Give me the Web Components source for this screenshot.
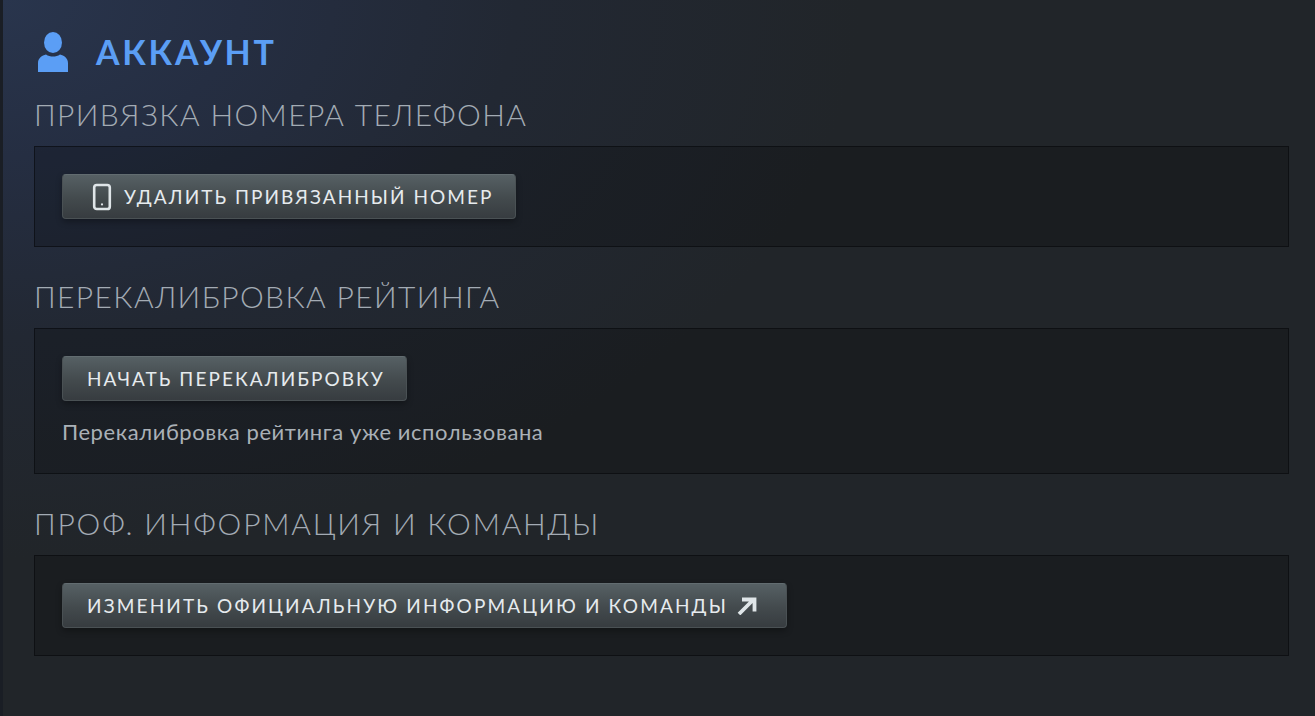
<!DOCTYPE html>
<html lang="ru">
<head>
<meta charset="utf-8">
<title>Аккаунт</title>
<style>
  html, body { margin: 0; height: 100%; }
  body {
    width: 1315px; height: 716px; overflow: hidden;
    font-family: Lato, "Noto Sans", "Liberation Sans", sans-serif;
    background:
      radial-gradient(ellipse 860px 560px at 0px 0px, #29354d 0%, #252e42 28%, #222833 60%, #212529 100%);
    background-color: #212529;
  }
</style>
</head>
<body>
<account-page>
  <page-title>АККАУНТ</page-title>

  <settings-section heading="ПРИВЯЗКА НОМЕРА ТЕЛЕФОНА">
    <game-button>
      <svg slot="icon" width="20" height="28" viewBox="0 0 20 28"><rect x="2.2" y="2" width="15.6" height="24" rx="2.6" fill="none" stroke="#dfe5e8" stroke-width="2.6"/><circle cx="10" cy="21.400" r="1.100" fill="#dfe5e8"/></svg>
      УДАЛИТЬ ПРИВЯЗАННЫЙ НОМЕР
    </game-button>
  </settings-section>

  <settings-section heading="ПЕРЕКАЛИБРОВКА РЕЙТИНГА">
    <game-button>НАЧАТЬ ПЕРЕКАЛИБРОВКУ</game-button>
    <p slot="note">Перекалибровка рейтинга уже использована</p>
  </settings-section>

  <settings-section heading="ПРОФ. ИНФОРМАЦИЯ И КОМАНДЫ" style="--heading-ls: 1.78px">
    <game-button style="--btn-ls: 2.15px">
      ИЗМЕНИТЬ ОФИЦИАЛЬНУЮ ИНФОРМАЦИЮ И КОМАНДЫ
      <svg slot="after" width="20" height="18" viewBox="0 0 20 18"><path d="M2 17 15 4M5 2.500h12.500v12" fill="none" stroke="#dfe5e8" stroke-width="3.8"/></svg>
    </game-button>
  </settings-section>
</account-page>

<script>
class AccountPage extends HTMLElement {
  connectedCallback() {
    this.attachShadow({mode: 'open'}).innerHTML = `
      <style>
        :host { display: flex; flex-direction: column; padding: 28px 26px 0 31px; height: 100%; box-sizing: border-box; border-left: 3px solid #1a1e25; }
      </style>
      <slot></slot>`;
  }
}

class PageTitle extends HTMLElement {
  connectedCallback() {
    this.attachShadow({mode: 'open'}).innerHTML = `
      <style>
        :host { display: flex; align-items: center; height: 48px; gap: 27px; padding-left: 3px; margin-bottom: 19px; color: #5b9ef5; }
        span { font-size: 34px; font-weight: 700; letter-spacing: 2.7px; line-height: 46px; }
        svg { display: block; }
      </style>
      <svg width="32" height="42" viewBox="0 0 32 42">
        <ellipse cx="16" cy="11.5" rx="9" ry="10.5" fill="#5b9ef5"/>
        <path d="M1 41V32c0-5 4-7.5 8-8.5 2 1.500 4.500 2 7 2s5-.5 7-2c4 1 8 3.500 8 8.500v9z" fill="#5b9ef5"/>
      </svg>
      <span><slot></slot></span>`;
  }
}

class SettingsSection extends HTMLElement {
  connectedCallback() {
    this.attachShadow({mode: 'open'}).innerHTML = `
      <style>
        :host { display: block; margin-bottom: 30px; }
        h2 { margin: 0; height: 51px; line-height: 38px; font-size: 30px; font-weight: 300; letter-spacing: var(--heading-ls, 1.38px); color: #a3abb4; white-space: nowrap; }
        .panel { border: 1px solid rgba(6,8,12,.6); background: rgba(0,0,0,.2); padding: 27px; }
        ::slotted(p) { margin: 17px 0 0; font-size: 22px; letter-spacing: .58px; line-height: 28px; color: #aab1b7; }
      </style>
      <h2></h2>
      <div class="panel">
        <slot></slot>
        <slot name="note"></slot>
      </div>`;
    this.shadowRoot.querySelector('h2').textContent = this.getAttribute('heading');
  }
}

class GameButton extends HTMLElement {
  connectedCallback() {
    this.attachShadow({mode: 'open'}).innerHTML = `
      <style>
        :host { display: flex; width: fit-content; }
        .btn {
          display: flex; align-items: center; gap: 12px; height: 45px; box-sizing: border-box; padding: 0 21.5px 0 24px;
          border-radius: 4px; border: 1px solid #4a5154; border-top-color: #626c70;
          background: linear-gradient(180deg, #566064 0%, #434a4d 55%, #373c40 100%);
          box-shadow: 0 3px 6px rgba(0,0,0,.3);
          color: #e6ebee; font-size: 19px; letter-spacing: var(--btn-ls, 2.05px); white-space: nowrap;
        }
        ::slotted(svg) { display: block; flex: none; }
        ::slotted([slot=icon]) { margin-left: 5px; }
        ::slotted([slot=after]) { margin: 0 8px 0 -3px; }
      </style>
      <div class="btn"><slot name="icon"></slot><span><slot></slot></span><slot name="after"></slot></div>`;
  }
}

customElements.define('account-page', AccountPage);
customElements.define('page-title', PageTitle);
customElements.define('settings-section', SettingsSection);
customElements.define('game-button', GameButton);
</script>
</body>
</html>
